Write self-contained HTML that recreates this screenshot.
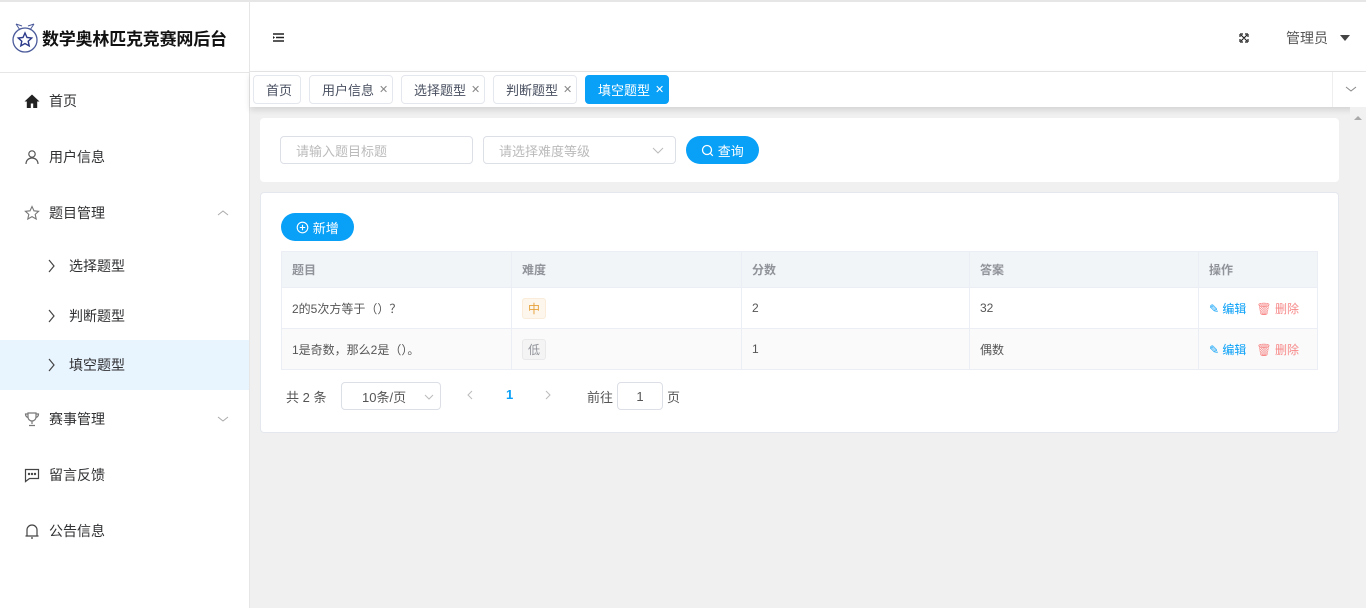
<!DOCTYPE html>
<html><head><meta charset="utf-8"><style>
*{box-sizing:border-box;margin:0;padding:0}
body{width:1366px;height:608px;overflow:hidden;font-family:"Liberation Sans","Noto Sans CJK SC",sans-serif;font-size:13px;color:#333;background:#f0f0f0;position:relative}
.abs{position:absolute}
.side{left:0;top:0;width:250px;height:608px;background:#fff;border-right:1px solid #e6e6e6;border-top:2px solid #e6e6e6}
.logo{left:0;top:0;width:249px;height:71px;border-bottom:1px solid #e6e6e6;display:flex;align-items:center;padding-left:11px}
.logo span{font-size:17px;font-weight:bold;color:#111;margin-left:3px;letter-spacing:-0.2px}
.mi{left:0;width:249px;height:56px;display:flex;align-items:center;padding-left:24px;font-size:14px;color:#303133}
.mi svg{margin-right:9px}
.sub{padding-left:46px}
.head{left:250px;top:0;width:1116px;height:72px;background:#fff;border-top:2px solid #e6e6e6;border-bottom:1px solid #e6e6e6}
.tabs{left:250px;top:72px;width:1116px;height:35px;background:#fff;box-shadow:0 3px 6px rgba(0,0,0,.12)}
.tab{top:3px;height:29px;border:1px solid #e4e7ed;border-radius:4px;background:#fff;font-size:13px;color:#495060;display:flex;align-items:center;padding:0 0 0 12px}
.tab i{font-style:normal;color:#888;margin-left:5px;font-size:11px}
.card{background:#fff;border-radius:4px;border:1px solid #e4e7ed}
.inp{height:28px;border:1px solid #dcdfe6;border-radius:4px;color:#bbb;font-size:13px;display:flex;align-items:center;padding-left:15px;background:#fff}
.btn{height:28px;border-radius:14px;background:#09a0f7;color:#fff;display:flex;align-items:center;justify-content:center;font-size:13px}
table{border-collapse:collapse;position:absolute;left:281px;top:251px;width:1037px;font-size:12px;table-layout:fixed}
td,th{border:1px solid #ebeef5;text-align:left;padding-left:10px;font-weight:normal;padding-top:0;padding-bottom:0}
th{height:36px;background:#f2f5f8;color:#909399;font-weight:bold}
td{height:41px;color:#555}
tr.g td{background:#fafafa}
.tag{display:inline-block;padding:0 5px;height:21px;line-height:20px;border-radius:3px;font-size:12px}
.ed{color:#09a0f7}.del{color:#f78989;margin-left:10px}
</style></head><body>
<div class="abs side">
<div class="abs logo"><svg width="28" height="36" viewBox="0 0 28 36"><path d="M5 5l4 6M23 5l-4 6M5 5l6 2M23 5l-6 2" stroke="#4a5a9a" fill="none"/><circle cx="14" cy="21" r="12" fill="none" stroke="#4a5a9a" stroke-width="1.3"/><path d="M14 14l2 4.5 4.7.5-3.5 3.2 1 4.7L14 24.5l-4.2 2.4 1-4.7-3.5-3.2 4.7-.5z" fill="none" stroke="#2c3a8a" stroke-width="1.4"/></svg><span>数学奥林匹克竞赛网后台</span></div>
</div>
<div class="abs mi" style="top:73px"><svg width="16" height="16" viewBox="0 0 16 16"><path d="M8 1.5L0.5 8.5h2.3V15h4v-4.5h2.4V15h4V8.5h2.3z" fill="#222"/></svg>首页</div>
<div class="abs mi" style="top:129px"><svg width="16" height="16" viewBox="0 0 16 16" fill="none" stroke="#555" stroke-width="1.2"><circle cx="8" cy="5" r="3.2"/><path d="M2 15c0-4 3-6 6-6s6 2 6 6"/></svg>用户信息</div>
<div class="abs mi" style="top:185px"><svg width="16" height="16" viewBox="0 0 16 16" fill="none" stroke="#777" stroke-width="1.1"><path d="M8 1.5l2 4.3 4.6.5-3.4 3.1 1 4.6L8 11.6 3.8 14l1-4.6L1.4 6.3l4.6-.5z"/></svg>题目管理<svg class="abs" style="left:217px" width="12" height="8" viewBox="0 0 12 8"><path d="M1 6l5-4 5 4" stroke="#aaa" fill="none"/></svg></div>
<div class="abs mi sub" style="top:238px"><svg width="10" height="14" viewBox="0 0 10 14"><path d="M3 1l5 6-5 6" stroke="#444" fill="none" stroke-width="1.2"/></svg><span style="margin-left:4px">选择题型</span></div>
<div class="abs mi sub" style="top:288px"><svg width="10" height="14" viewBox="0 0 10 14"><path d="M3 1l5 6-5 6" stroke="#444" fill="none" stroke-width="1.2"/></svg><span style="margin-left:4px">判断题型</span></div>
<div class="abs mi sub" style="top:340px;height:50px;background:#e8f4fe"><svg width="10" height="14" viewBox="0 0 10 14"><path d="M3 1l5 6-5 6" stroke="#444" fill="none" stroke-width="1.2"/></svg><span style="margin-left:4px">填空题型</span></div>
<div class="abs mi" style="top:391px"><svg width="16" height="16" viewBox="0 0 16 16" fill="none" stroke="#777" stroke-width="1.2"><path d="M4 2h8v4a4 4 0 01-8 0zM4 3H1.5c0 2 1 3 2.5 3.5M12 3h2.5c0 2-1 3-2.5 3.5M8 10v3M5 14.5h6"/></svg>赛事管理<svg class="abs" style="left:217px" width="12" height="8" viewBox="0 0 12 8"><path d="M1 2l5 4 5-4" stroke="#aaa" fill="none"/></svg></div>
<div class="abs mi" style="top:447px"><svg width="16" height="16" viewBox="0 0 16 16" fill="none" stroke="#444" stroke-width="1.2"><path d="M1.5 2.5h13v9h-9l-4 3z"/><circle cx="5" cy="7" r=".6" fill="#444"/><circle cx="8" cy="7" r=".6" fill="#444"/><circle cx="11" cy="7" r=".6" fill="#444"/></svg>留言反馈</div>
<div class="abs mi" style="top:503px"><svg width="16" height="16" viewBox="0 0 16 16" fill="none" stroke="#444" stroke-width="1.2"><path d="M3 13V7a5 5 0 0110 0v6zM1.5 13h13M7 15h2"/></svg>公告信息</div>

<div class="abs head">
<svg class="abs" style="left:23px;top:31px" width="11" height="9" viewBox="0 0 11 9"><path d="M0 1h11M3 4.5h8M0 8h11" stroke="#222" stroke-width="1.4"/><path d="M0 3l2 1.5L0 6z" fill="#222"/></svg>
<svg class="abs" style="left:989px;top:31px" width="10" height="10" viewBox="0 0 10 10"><path d="M2 2l6 6M8 2l-6 6M1 1h3M1 1v3M9 9h-3M9 9v-3M9 1h-3M9 1v3M1 9h3M1 9v-3" stroke="#222" stroke-width="1.2"/></svg>
<div class="abs" style="left:1036px;top:26px;font-size:14px;color:#555">管理员</div>
<svg class="abs" style="left:1090px;top:33px" width="10" height="6" viewBox="0 0 10 6"><path d="M0 0h10L5 6z" fill="#444"/></svg>
</div>
<div class="abs tabs">
<div class="abs tab" style="left:3px;width:48px">首页</div>
<div class="abs tab" style="left:59px;width:84px">用户信息<i>✕</i></div>
<div class="abs tab" style="left:151px;width:84px">选择题型<i>✕</i></div>
<div class="abs tab" style="left:243px;width:84px">判断题型<i>✕</i></div>
<div class="abs tab" style="left:335px;width:84px;background:#09a0f7;border-color:#09a0f7;color:#fff">填空题型<i style="color:#fff">✕</i></div>
<div class="abs" style="left:1082px;top:0;width:34px;height:35px;background:#fff;border-left:1px solid #eee"><svg style="margin:14px 0 0 12px" width="12" height="8" viewBox="0 0 12 8"><path d="M1 1l5 4 5-4" stroke="#888" fill="none"/></svg></div>
</div>
<div class="abs" style="left:1350px;top:107px;width:16px;height:501px;background:#f1f1f1"><div style="margin:5px 0 0 4px;width:0;height:0;border:4px solid transparent;border-bottom:4px solid #aaa"></div></div>

<div class="abs card" style="left:260px;top:118px;width:1079px;height:64px;border:none"></div>
<div class="abs inp" style="left:280px;top:136px;width:193px">请输入题目标题</div>
<div class="abs inp" style="left:483px;top:136px;width:193px">请选择难度等级<svg class="abs" style="left:168px;top:10px" width="12" height="8" viewBox="0 0 12 8"><path d="M1 1l5 5 5-5" stroke="#bbb" fill="none"/></svg></div>
<div class="abs btn" style="left:686px;top:136px;width:73px"><svg width="13" height="13" viewBox="0 0 13 13" fill="none" stroke="#fff" stroke-width="1.3"><circle cx="6" cy="6" r="4.5"/><path d="M9.3 9.3l2.5 2.5"/></svg>&nbsp;查询</div>

<div class="abs card" style="left:260px;top:192px;width:1079px;height:241px"></div>
<div class="abs btn" style="left:281px;top:213px;width:73px"><svg width="13" height="13" viewBox="0 0 13 13" fill="none" stroke="#fff" stroke-width="1.1"><circle cx="6.5" cy="6.5" r="5.3"/><path d="M6.5 3.8v5.4M3.8 6.5h5.4"/></svg>&nbsp;新增</div>
<table>
<tr><th style="width:230px">题目</th><th style="width:230px">难度</th><th style="width:228px">分数</th><th style="width:229px">答案</th><th>操作</th></tr>
<tr><td>2的5次方等于（）？</td><td><span class="tag" style="background:#fdf6ec;border:1px solid #faecd8;color:#e6a23c">中</span></td><td>2</td><td>32</td><td><span class="ed">✎ 编辑</span><span class="del">🗑 删除</span></td></tr>
<tr class="g"><td>1是奇数，那么2是（）。</td><td><span class="tag" style="background:#f4f4f5;border:1px solid #e9e9eb;color:#909399">低</span></td><td>1</td><td>偶数</td><td><span class="ed">✎ 编辑</span><span class="del">🗑 删除</span></td></tr>
</table>
<div class="abs" style="left:286px;top:387px;font-size:13px;color:#555">共 2 条</div>
<div class="abs inp" style="left:341px;top:382px;width:100px;color:#555;padding-left:20px">10条/页<svg class="abs" style="left:82px;top:11px" width="10" height="7" viewBox="0 0 10 7"><path d="M1 1l4 4 4-4" stroke="#bbb" fill="none"/></svg></div>
<svg class="abs" style="left:467px;top:390px" width="6" height="10" viewBox="0 0 6 10"><path d="M5 1L1 5l4 4" stroke="#bbb" fill="none"/></svg>
<div class="abs" style="left:506px;top:387px;color:#09a0f7;font-weight:bold">1</div>
<svg class="abs" style="left:545px;top:390px" width="6" height="10" viewBox="0 0 6 10"><path d="M1 1l4 4-4 4" stroke="#bbb" fill="none"/></svg>
<div class="abs" style="left:587px;top:387px;color:#555">前往</div>
<div class="abs inp" style="left:617px;top:382px;width:46px;color:#555;padding-left:0;justify-content:center">1</div>
<div class="abs" style="left:667px;top:387px;color:#555">页</div>
</body></html>
